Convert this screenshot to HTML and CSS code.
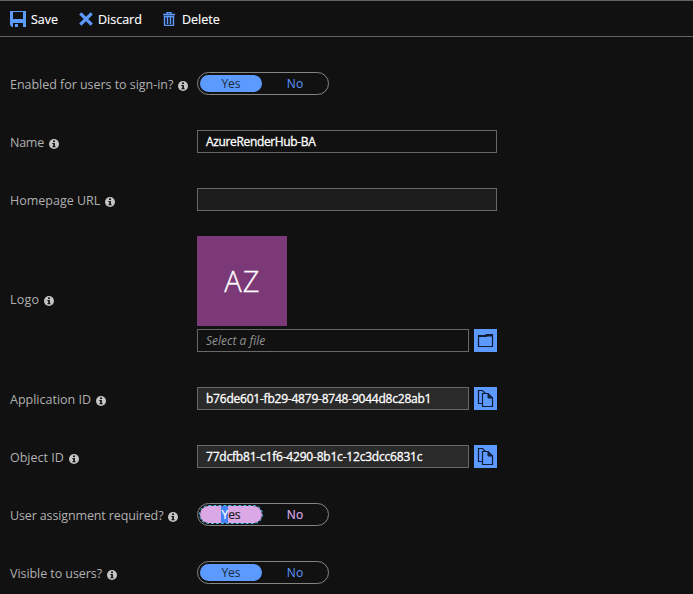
FILE: index.html
```html
<!DOCTYPE html>
<html lang="en">
<head>
<meta charset="utf-8">
<title>Properties</title>
<link rel="stylesheet" href="styles.css">
</head>
<body>
<svg class="defs" width="0" height="0" aria-hidden="true">
  <symbol id="info" viewBox="0 0 10 10"><circle cx="5" cy="5" r="5" fill="#c4c4c4"/><path d="M4 1.6h2v1.5H4zM3.3 4h2.6v3.2h.7v1H3.4v-1h.8V4.9h-.9z" fill="#111"/></symbol>
  <symbol id="copy" viewBox="0 0 23 23"><path d="M8.500 16.500H4.500V3.500H8.500L11.500 6.500"/><path d="M8.500 6.500H14L18.500 11V19.500H8.500Z"/><path d="M14 6.500V11H18.500Z" fill="#1b2c4d" stroke-width="1"/></symbol>
</svg>
<header class="toolbar">
  <button class="command save"><svg width="16" height="16" viewBox="0 0 16 16"><path fill="#5c9aff" fill-rule="evenodd" d="M0 0h16v16h-3v-4H3v4H2l-2-2zM3 1v7h10V1z"/><path fill="#5c9aff" d="M5 13h3v3H5z"/></svg><span>Save</span></button>
  <button class="command discard"><svg width="14" height="14" viewBox="0 0 14 14"><path d="M1.300 1.300L12.700 12.700M12.700 1.300L1.300 12.700" stroke="#5c9aff" stroke-width="3.200"/></svg><span>Discard</span></button>
  <button class="command delete"><svg width="12" height="14" viewBox="0 0 12 14"><path d="M0 2.500H12M4 2V.5H8V2M1.500 4V12.500Q1.500 13.500 2.500 13.500H9.500Q10.500 13.500 10.500 12.500V4M1 4.500H11M4.500 5V12M7.500 5V12" fill="none" stroke="#5c9aff" stroke-width="1.400"/></svg><span>Delete</span></button>
</header>
<main class="form">
  <div class="row"><div class="label l-enabled"><span>Enabled for users to sign-in?</span><svg class="info"><use href="#info"/></svg></div>
    <div class="toggle"><span class="option on">Yes</span><span class="option">No</span></div></div>
  <div class="row"><div class="label l-name"><span>Name</span><svg class="info"><use href="#info"/></svg></div>
    <div class="field v-name">AzureRenderHub-BA</div></div>
  <div class="row"><div class="label l-home"><span>Homepage URL</span><svg class="info"><use href="#info"/></svg></div>
    <div class="field empty"></div></div>
  <div class="row logo-row"><div class="label l-logo"><span>Logo</span><svg class="info"><use href="#info"/></svg></div>
    <div class="logo-control"><div class="logo">AZ</div>
      <div class="with-button"><div class="field placeholder">Select a file</div><button class="square"><svg width="23" height="23" viewBox="0 0 23 23"><path d="M4.500 6.500H11L12.500 5.500H18.500V17.500H4.500Z"/><path d="M4.500 7H12L13 6.500H18.500" stroke-width="2"/></svg></button></div></div></div>
  <div class="row"><div class="label l-app"><span>Application ID</span><svg class="info"><use href="#info"/></svg></div>
    <div class="with-button"><div class="field readonly v-app">b76de601-fb29-4879-8748-9044d8c28ab1</div><button class="square"><svg width="23" height="23"><use href="#copy"/></svg></button></div></div>
  <div class="row"><div class="label l-object"><span>Object ID</span><svg class="info"><use href="#info"/></svg></div>
    <div class="with-button"><div class="field readonly v-object">77dcfb81-c1f6-4290-8b1c-12c3dcc6831c</div><button class="square"><svg width="23" height="23"><use href="#copy"/></svg></button></div></div>
  <div class="row"><div class="label l-user"><span>User assignment required?</span><svg class="info"><use href="#info"/></svg></div>
    <div class="toggle edited"><span class="option on"><span class="selected">Y</span>es</span><span class="option">No</span></div></div>
  <div class="row"><div class="label l-visible"><span>Visible to users?</span><svg class="info"><use href="#info"/></svg></div>
    <div class="toggle"><span class="option on">Yes</span><span class="option">No</span></div></div>
</main>
</body>
</html>
```
FILE: styles.css
```css
* { box-sizing: border-box; }
body { margin: 0; height: 594px; overflow: hidden; background: #111; color: #fff; font: 12.5px/20px "Open Sans", "Noto Sans", sans-serif; }
.defs { display: none; }
button { border: 0; padding: 0; background: none; color: inherit; font: inherit; }
.toolbar { display: flex; height: 37px; padding-left: 10px; border-top: 1px solid #626262; border-bottom: 1px solid #626262; }
.command { display: flex; align-items: center; height: 36px; gap: 5px; white-space: nowrap; }
.command span { padding-top: 2px; -webkit-text-stroke: .15px #fff; }
.save { width: 69px; }
.discard { width: 84px; }
.delete { gap: 7px; }
.form { display: flex; flex-direction: column; gap: 35px; padding-top: 35px; }
.row { display: grid; grid-template-columns: 187px 300px; padding-left: 10px; flex: none; min-height: 23px; }
.label { display: flex; align-items: center; gap: 5px; height: 23px; padding-top: 1px; color: #b0b0b0; white-space: nowrap; }
.label span { padding-top: 2px; }
.info { width: 10px; height: 10px; margin-top: 3px; flex: none; }
.l-enabled { letter-spacing: -.035px; }
.l-name { letter-spacing: -.25px; }
.l-logo { letter-spacing: .2px; }
.l-user { letter-spacing: -.13px; }
.l-visible { letter-spacing: -.06px; }
.toggle { display: flex; width: 132px; height: 23px; padding: 2px; border: 1px solid #858585; border-radius: 12px; font-size: 12px; }
.option { width: 62px; height: 17px; line-height: 17px; border-radius: 9px; text-align: center; color: #5c9aff; }
.option + .option { margin-left: 2px; }
.option.on { background: #5c9aff; color: #202a3d; }
.field { width: 300px; height: 23px; border: 1px solid #686868; padding-left: 8px; line-height: 21px; font-size: 12px; font-weight: 500; white-space: nowrap; }
.v-name { letter-spacing: -.35px; -webkit-text-stroke: .3px #fff; }
.v-app { letter-spacing: -.22px; -webkit-text-stroke: .3px #fff; }
.v-object { letter-spacing: -.2px; -webkit-text-stroke: .3px #fff; }
.empty { background: #1d1d1d; }
.readonly { background: #2a2a2a; }
.with-button { display: flex; gap: 5px; }
.with-button .field { width: 272px; }
.square { width: 23px; height: 23px; background: #5c9aff; }
.square svg { display: block; fill: none; stroke: #101c33; stroke-width: 1.2; }
.logo-row { margin-top: -10px; }
.logo-row .label { align-self: center; position: relative; top: 5px; }
.logo-row .label span { padding-top: 0; }
.logo-control { display: flex; flex-direction: column; gap: 3px; }
.logo { width: 90px; height: 90px; background: #7c3977; font-size: 29px; font-weight: 300; letter-spacing: 1.2px; line-height: 89px; padding-left: 1px; text-align: center; -webkit-text-stroke: .3px #fff; }
.placeholder { color: #929292; font-style: italic; font-weight: 400; }
.edited .option { color: #d9a8e5; font-weight: 500; -webkit-text-stroke: .2px; }
.edited .option.on { background: #d9a8e5; color: #222; outline: 1px dashed #46b9e8; font-weight: 400; }
.option.on .selected { display: inline-block; height: 17px; background: #4383f5; color: #fff; }
```
